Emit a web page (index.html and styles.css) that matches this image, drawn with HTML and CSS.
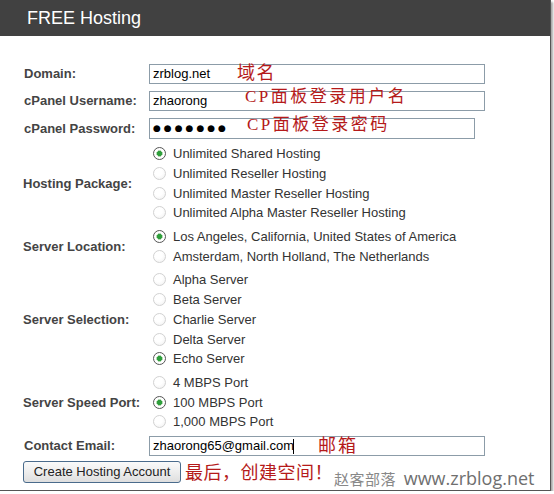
FILE: index.html
```html
<!DOCTYPE html>
<html lang="en">

<head>
    <title>FREE Hosting</title>
    <link rel="stylesheet" href="styles.css">
</head>

<body>
    <div class="frame">
        <div class="title-bar">FREE Hosting</div>

        <form class="signup">
            <table class="fields">
                <tr class="text-row">
                    <td class="label">Domain:</td>
                    <td><input type="text" class="field" value="zrblog.net" readonly></td>
                </tr>
                <tr class="text-row">
                    <td class="label">cPanel Username:</td>
                    <td><input type="text" class="field" value="zhaorong" readonly></td>
                </tr>
                <tr class="text-row pass-row">
                    <td class="label">cPanel Password:</td>
                    <td><div class="field short dots">●●●●●●●</div></td>
                </tr>
                <tr class="group">
                    <td class="label">Hosting Package:</td>
                    <td>
                        <label class="opt"><input type="radio" name="package" checked> Unlimited Shared Hosting</label>
                        <label class="opt"><input type="radio" name="package"> Unlimited Reseller Hosting</label>
                        <label class="opt"><input type="radio" name="package"> Unlimited Master Reseller Hosting</label>
                        <label class="opt"><input type="radio" name="package"> Unlimited Alpha Master Reseller Hosting</label>
                    </td>
                </tr>
                <tr class="group">
                    <td class="label">Server Location:</td>
                    <td>
                        <label class="opt"><input type="radio" name="location" checked> Los Angeles, California, United States of America</label>
                        <label class="opt"><input type="radio" name="location"> Amsterdam, North Holland, The Netherlands</label>
                    </td>
                </tr>
                <tr class="group">
                    <td class="label">Server Selection:</td>
                    <td>
                        <label class="opt"><input type="radio" name="server"> Alpha Server</label>
                        <label class="opt"><input type="radio" name="server"> Beta Server</label>
                        <label class="opt"><input type="radio" name="server"> Charlie Server</label>
                        <label class="opt"><input type="radio" name="server"> Delta Server</label>
                        <label class="opt"><input type="radio" name="server" checked> Echo Server</label>
                    </td>
                </tr>
                <tr class="group">
                    <td class="label">Server Speed Port:</td>
                    <td>
                        <label class="opt"><input type="radio" name="speed"> 4 MBPS Port</label>
                        <label class="opt"><input type="radio" name="speed" checked> 100 MBPS Port</label>
                        <label class="opt"><input type="radio" name="speed"> 1,000 MBPS Port</label>
                    </td>
                </tr>
                <tr class="text-row mail-row">
                    <td class="label">Contact Email:</td>
                    <td>
                        <div class="field-wrap">
                            <input type="text" class="field" value="zhaorong65@gmail.com" readonly>
                            <span class="caret"></span>
                        </div>
                    </td>
                </tr>
            </table>

            <button type="button" class="submit">Create Hosting Account</button>
        </form>

        <!-- notes written on top of the screenshot -->
        <span class="note note-domain">域名</span>
        <span class="note note-user">CP面板登录用户名</span>
        <span class="note note-pass">CP面板登录密码</span>
        <span class="note note-mail">邮箱</span>
        <span class="note note-final">最后，创建空间！</span>
        <span class="mark"><span class="mark-cn">赵客部落</span> www.zrblog.net</span>
    </div>
</body>

</html>
```

FILE: styles.css
```css
body {
    margin: 0;
    padding: 0;
    background-color: #fff;
    font-family: Arial, "Liberation Sans", sans-serif;
}

.frame {
    position: relative;
    width: 550px;
    height: 490px;
    background-color: #fff;
    border-right: 1px solid #555;
    border-bottom: 1px solid #555;
    box-shadow: 2px 2px 2px rgba(0, 0, 0, 0.35);
    overflow: hidden;
}

.title-bar {
    height: 36px;
    line-height: 36px;
    padding-left: 27px;
    background-color: #414141;
    color: #fff;
    font-size: 18px;
}

.signup {
    padding: 24px 0 0 23px;
}

.fields {
    border-collapse: collapse;
}

.fields td {
    padding: 0;
    vertical-align: middle;
}

.label {
    width: 125px;
    padding-left: 1px !important;
    font-size: 13px;
    font-weight: bold;
    color: #444;
    white-space: nowrap;
}

.text-row {
    height: 27px;
}

.pass-row {
    height: 28px;
}

.mail-row {
    height: 24px;
}

.field {
    display: block;
    width: 336px;
    height: 20px;
    margin: 0;
    padding: 0 3px;
    box-sizing: border-box;
    border: 1px solid #8c9ca8;
    font-family: Arial, "Liberation Sans", sans-serif;
    font-size: 13px;
    color: #000;
    outline: none;
}

.field.short {
    width: 326px;
    height: 21px;
}

.dots {
    font-family: "DejaVu Sans", sans-serif;
    font-size: 9px;
    line-height: 19px;
    letter-spacing: 3px;
}

.field-wrap {
    position: relative;
}

.caret {
    position: absolute;
    left: 144px;
    top: 3px;
    width: 1px;
    height: 15px;
    background-color: #000;
}

.group td {
    padding: 2px 0 !important;
}

.opt {
    display: flex;
    align-items: center;
    height: 19.7px;
    font-size: 13px;
    color: #333;
    white-space: nowrap;
}

.opt input {
    appearance: none;
    -webkit-appearance: none;
    width: 13px;
    height: 13px;
    margin: 0 7px 0 4px;
    border: 1px solid #d2d2d2;
    border-radius: 50%;
    background: radial-gradient(circle at 40% 35%, #fff 40%, #eee 100%);
}

.opt input:checked {
    border-color: #555;
    background: radial-gradient(circle, #2f9e3c 0 2.4px, #b8dcb8 2.5px 3.3px, #fff 3.5px);
}

.submit {
    display: block;
    width: 158px;
    height: 22px;
    margin-top: 3px;
    padding: 0;
    border: 1px solid #4a6b8c;
    border-radius: 3px;
    background: linear-gradient(#fafafa, #ececec 55%, #dedede);
    font-family: Arial, "Liberation Sans", sans-serif;
    font-size: 13px;
    color: #222;
}

.note {
    position: absolute;
    color: #b51a1a;
    font-family: "Liberation Serif", "Noto Sans CJK SC", serif;
    font-size: 17px;
    line-height: 20px;
    white-space: nowrap;
}

.note-domain {
    left: 237px;
    top: 63px;
    font-size: 18px;
    letter-spacing: 1.5px;
}

.note-user {
    left: 245px;
    top: 87px;
    letter-spacing: 2.5px;
}

.note-pass {
    left: 247px;
    top: 115px;
    letter-spacing: 2.5px;
}

.note-mail {
    left: 318px;
    top: 436px;
    font-size: 18px;
    letter-spacing: 2px;
}

.note-final {
    left: 185px;
    top: 463px;
    font-size: 18px;
    letter-spacing: 0.5px;
}

.mark {
    position: absolute;
    left: 334px;
    top: 467px;
    color: #6f6f6f;
    font-family: "Open Sans", "Noto Sans CJK SC", sans-serif;
    font-size: 18px;
    line-height: 22px;
    white-space: nowrap;
}

.mark-cn {
    margin-right: 3px;
    font-size: 15px;
    letter-spacing: 0.5px;
    color: #888;
}
```
